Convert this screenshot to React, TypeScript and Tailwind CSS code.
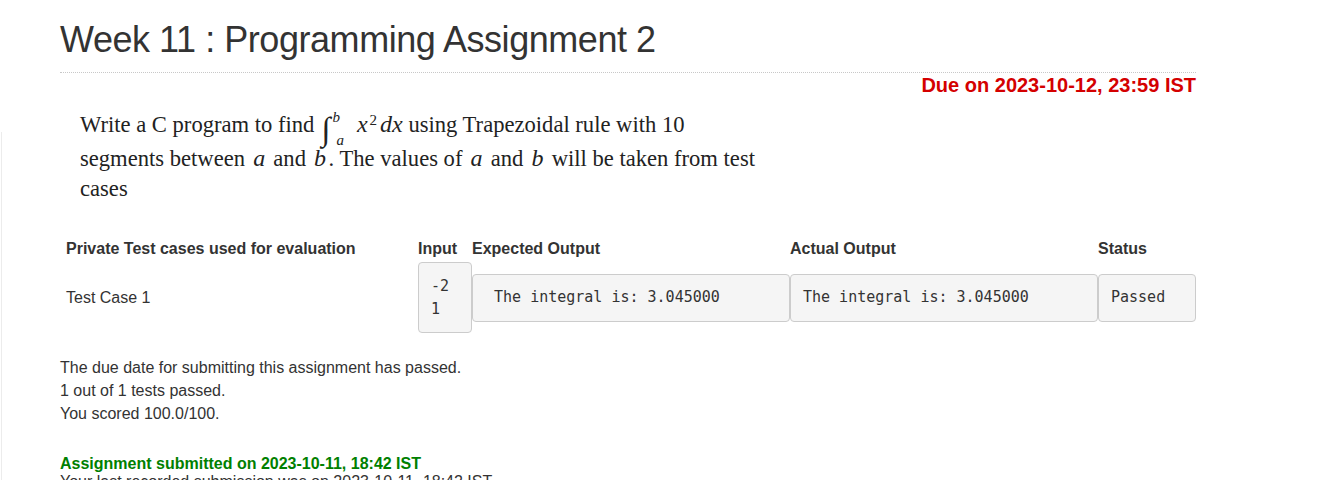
export default function App() {
  const mono = "font-['DejaVu_Sans_Mono','Liberation_Mono',monospace] text-[15px] leading-[23px] text-[#333]";
  const box = "bg-[#f5f5f5] border border-[#ccc] rounded-[4px] px-[12px] py-[11.5px] whitespace-pre";
  const mi = "italic text-[24px] leading-[0px] mx-[2.5px]";

  return (
    <div className="min-h-[480px] bg-white flex font-['Liberation_Sans',Arial,sans-serif] text-[#333]">
      {/* faint left rail */}
      <div className="w-[2px] shrink-0 flex flex-col">
        <div className="h-[132px]" />
        <div className="flex-1 border-r border-[#ececec]" />
      </div>

      <div className="ml-[58px] w-[1136px]">
        {/* Title */}
        <h1 className="pt-[20px] text-[36px] leading-[40px] tracking-[-0.45px] text-[#333]">
          Week 11 : Programming Assignment 2
        </h1>
        <div className="mt-[12px] border-b border-dotted border-[#c8c8c8]" />

        <p className="text-right text-[20px] leading-[24px] font-bold text-[#d40000]">
          Due on 2023-10-12, 23:59 IST
        </p>

        {/* Problem statement */}
        <div className="mt-[13px] ml-[20px] w-[686px] font-['Liberation_Serif','Times_New_Roman',serif] text-[22.6px] leading-[30px] text-[#222]">
          Write a C program to find
          <span className="inline-flex h-[30px] items-center align-[-8px] ml-[7px] mr-[13px]">
            <span className="italic text-[33px] leading-[36px]">∫</span>
            <span className="flex flex-col italic text-[15px] leading-[23px]">
              <span className="ml-[2px]">b</span>
              <span className="ml-[6px]">a</span>
            </span>
          </span>
          <span className="italic text-[24px] leading-[0px]">x</span>
          <sup className="text-[15px] leading-[0px] ml-[2px]">2</sup>
          <span className="italic text-[24px] leading-[0px] ml-[3px]">dx</span> using Trapezoidal rule with 10 segments
          between <span className={mi}>a</span> and <span className={mi}>b</span>. The values of{" "}
          <span className={mi}>a</span> and <span className={mi}>b</span> will be taken from test cases
        </div>

        {/* Test cases table */}
        <div className="mt-[34px] ml-[6px] grid grid-cols-[352px_54px_318px_308px_98px] items-center text-[16px]">
          <div className="font-bold leading-[22px]">Private Test cases used for evaluation</div>
          <div className="font-bold leading-[22px]">Input</div>
          <div className="font-bold leading-[22px]">Expected Output</div>
          <div className="font-bold leading-[22px]">Actual Output</div>
          <div className="font-bold leading-[22px]">Status</div>

          <div className="mt-[2px] leading-[22px]">Test Case 1</div>
          <div className={`mt-[2px] ${box} ${mono}`}>{"-2\n1"}</div>
          <div className={`mt-[2px] ${box} ${mono}`}>{" The integral is: 3.045000"}</div>
          <div className={`mt-[2px] ${box} ${mono}`}>{"The integral is: 3.045000"}</div>
          <div className={`mt-[2px] ${box} ${mono}`}>{"Passed"}</div>
        </div>

        {/* Summary */}
        <div className="mt-[23px] text-[16px] leading-[23px] text-[#333]">
          <p>The due date for submitting this assignment has passed.</p>
          <p>1 out of 1 tests passed.</p>
          <p>You scored 100.0/100.</p>
        </div>

        <p className="mt-[29px] text-[16px] leading-[20px] font-bold text-[#008000]">
          Assignment submitted on 2023-10-11, 18:42 IST
        </p>
        <p className="text-[16px] leading-[16px] text-[#333]">
          Your last recorded submission was on 2023-10-11, 18:42 IST
        </p>
      </div>
    </div>
  );
}
